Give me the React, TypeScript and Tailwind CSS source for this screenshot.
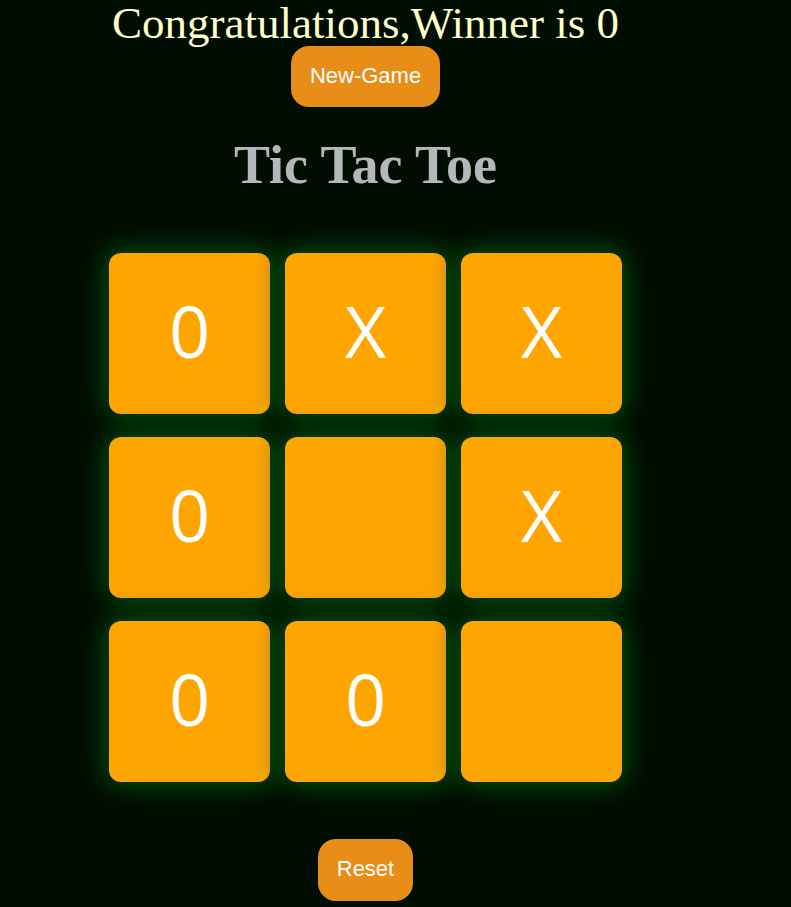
import React from "react";

const cells = ["0", "X", "X", "0", "", "X", "0", "0", ""];

export default function App() {
  return (
    <div className="min-h-[907px] w-full bg-[#000d01]">
      <div className="flex w-[731px] flex-col items-center">
        <h1 className="text-[45px] leading-[47px] text-[#ffffc7] [font-family:'Liberation_Serif',serif]">
          Congratulations,Winner is 0
        </h1>
        <button className="mt-[-1px] h-[61px] w-[149px] rounded-[18px] bg-[#e88d17] pb-[2px] text-[22px] text-white [font-family:'Liberation_Sans',sans-serif]">
          New-Game
        </button>
        <h2 className="mt-[27px] text-[54px] font-bold leading-[62px] text-[#b4b8ba] [font-family:'Liberation_Serif',serif]">
          Tic Tac Toe
        </h2>
        <div className="mt-[57px] grid grid-cols-[161px_161px_161px] gap-x-[15px] gap-y-[23px]">
          {cells.map((c, i) => (
            <button
              key={i}
              className="flex h-[161px] w-[161px] items-center justify-center rounded-[12px] bg-[#ffa500] pb-[8px] text-[72px] text-white shadow-[0_0_26px_3px_#04560e] [font-family:'Open_Sans',sans-serif]"
            >
              {c}
            </button>
          ))}
        </div>
        <button className="mt-[57px] h-[62px] w-[95px] rounded-[18px] bg-[#e88d17] pb-[4px] text-[22px] text-white [font-family:'Liberation_Sans',sans-serif]">
          Reset
        </button>
      </div>
    </div>
  );
}
